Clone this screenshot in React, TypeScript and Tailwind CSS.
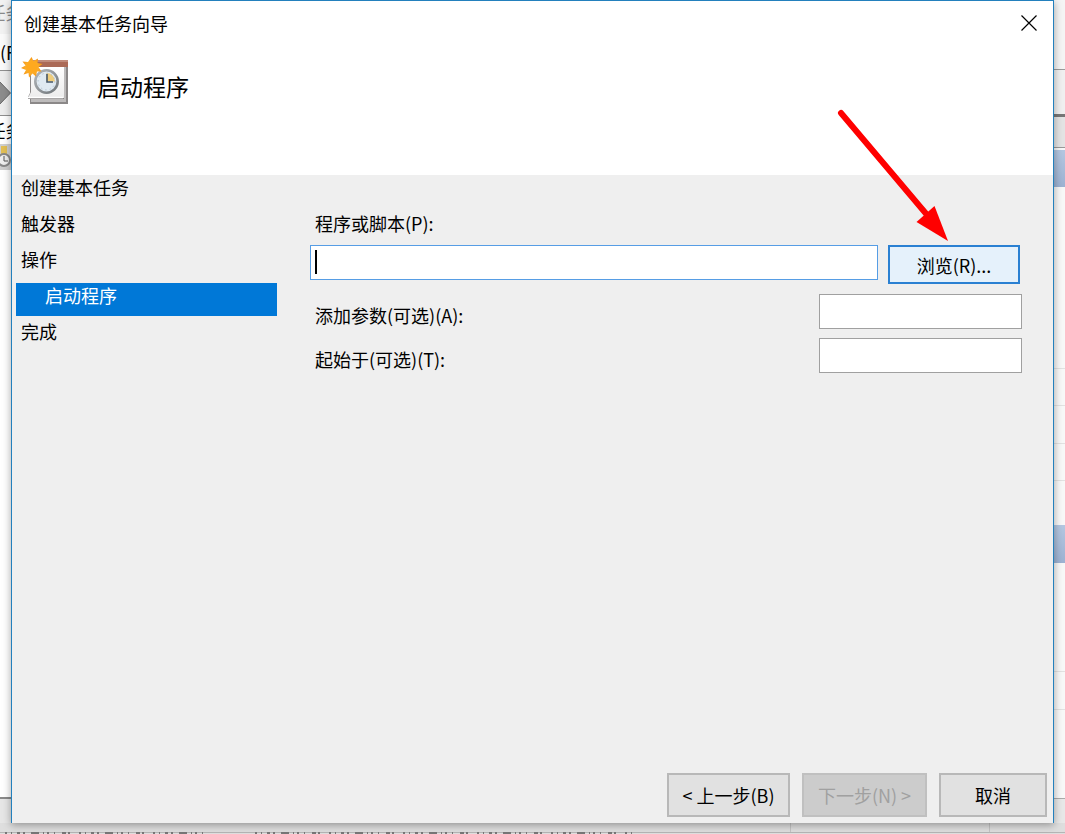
import { useState } from "react";

const steps = [
  { id: "basic", label: "创建基本任务" },
  { id: "trigger", label: "触发器" },
  { id: "action", label: "操作" },
  { id: "program", label: "启动程序", sub: true },
  { id: "finish", label: "完成" },
];

function TaskIcon() {
  return (
    <svg width="48" height="48" viewBox="0 0 48 48" aria-hidden="true">
      <defs>
        <linearGradient id="paper" x1="0" y1="0" x2="0" y2="1">
          <stop offset="0" stopColor="#ffffff" />
          <stop offset="1" stopColor="#ececec" />
        </linearGradient>
        <linearGradient id="rim" x1="0" y1="0" x2="1" y2="1">
          <stop offset="0" stopColor="#b4b8bc" />
          <stop offset="1" stopColor="#6f7579" />
        </linearGradient>
        <radialGradient id="sun">
          <stop offset="0" stopColor="#ffcf4a" />
          <stop offset="1" stopColor="#f79412" />
        </radialGradient>
      </defs>
      <path d="M9 5H47V47H9V42H7V40L9 36Z" fill="#8b8888" />
      <path d="M10 42H43V9H45V45H10Z" fill="#bdbbbb" />
      <path d="M10 3H47V10H10Z" fill="#ab6a57" />
      <path d="M10 3H47V5H10Z" fill="#c08b7b" />
      <path d="M10 10H43V41H7L10 35Z" fill="url(#paper)" />
      <path d="M7 40.500H42" stroke="#fff" strokeWidth="1.500" />
      <circle cx="25.500" cy="24.500" r="11.200" fill="#dfe9f1" stroke="url(#rim)" strokeWidth="2.600" />
      <path d="M25.500 24.500V16A8.500 8.500 0 0 1 34 24.500Z" fill="#efcd7c" />
      <circle cx="25.500" cy="24.500" r="8.400" fill="none" stroke="#a5b6c4" strokeWidth="1" strokeDasharray="1 3.400" />
      <path d="M26 17V25H32" fill="none" stroke="#45586b" strokeWidth="1.600" />
      <path
        d="M10.500 0L12.500 4L17 1.500L16.500 6L21.500 7L17.500 10L20.500 14.500L16 14.500L15 19.500L11.500 16.500L8 20.500L7.500 16L2.500 17.500L5 13L0 11L4.500 8.500L1.500 4.500L7 5Z"
        fill="url(#sun)"
      />
      <circle cx="11" cy="10" r="6" fill="#ffa91f" />
    </svg>
  );
}

function RedArrow() {
  return (
    <svg
      className="pointer-events-none absolute top-[106px] right-[104px]"
      width="114"
      height="136"
      viewBox="0 0 114 136"
      aria-hidden="true"
    >
      <path d="M6 6L93 109" stroke="#ff0000" strokeWidth="6" strokeLinecap="round" />
      <path d="M99.500 99L113 134L81.500 115Z" fill="#ff0000" />
    </svg>
  );
}

// Part of the main window that stays visible left of the wizard
function LeftEdge() {
  return (
    <div className="flex w-[11px] shrink-0 flex-col overflow-hidden whitespace-nowrap bg-white" aria-hidden="true">
      <div className="flex h-[34px] justify-center bg-[#f2f2f2] leading-6 text-[#8a8a8a]">任务</div>
      <div className="flex h-9 bg-[#fafafa] leading-9">(F)</div>
      <div className="flex h-[46px] items-center justify-end border-y border-[#8f8f8f] bg-[#ededed]">
        <svg className="shrink-0" width="24" height="24" viewBox="0 0 24 24">
          <path d="M12 0L23.500 12L12 24L0 12Z" fill="#8c8c8c" stroke="#666" />
        </svg>
      </div>
      <div className="flex h-7 justify-center leading-7">任务</div>
      <div className="flex h-[26px] items-center justify-center bg-[#cfcfcf]">
        <svg className="shrink-0" width="18" height="24" viewBox="0 0 18 24">
          <path d="M4 1H10V10H4Z" fill="#e2bf55" />
          <circle cx="7" cy="15" r="6" fill="#eee" stroke="#888" strokeWidth="2" />
          <path d="M7 11V16H11" fill="none" stroke="#555" />
        </svg>
      </div>
      <div className="flex-1 border-b-2 border-[#8a8a8a]" />
      <div className="h-6 bg-[#e6e6e6]" />
    </div>
  );
}

function RightEdge() {
  return (
    <div className="flex w-[11px] shrink-0 flex-col bg-[#f8f8f8]" aria-hidden="true">
      <div className="h-[70px] border-b border-[#9b9b9b] bg-[#f5f5f5]" />
      <div className="h-[47px] border-b-3 border-[#777] bg-[#f0f0f0]" />
      <div className="h-[31px] border-b border-[#999] bg-[#e4e4e4]" />
      <div className="mt-0.5 h-[37px] bg-linear-to-b from-[#b4c7e1] to-[#9db2d2]" />
      <div className="h-[182px] border-b border-[#e2e2e2]" />
      <div className="h-[37px] border-b border-[#e2e2e2]" />
      <div className="h-[38px] border-b border-[#e2e2e2]" />
      <div className="h-[37px] border-b border-[#e2e2e2]" />
      <div className="h-11" />
      <div className="h-[38px] bg-linear-to-b from-[#b4c7e1] to-[#9db2d2]" />
      <div className="h-[109px] border-b border-[#e2e2e2]" />
      <div className="h-[38px] border-b border-[#e2e2e2]" />
      <div className="flex-1 border-b border-[#aaa]" />
      <div className="h-6 bg-[#e8e8e8]" />
    </div>
  );
}

export default function App() {
  const [current, setCurrent] = useState("program");
  const [program, setProgram] = useState("");
  const [args, setArgs] = useState("");
  const [startIn, setStartIn] = useState("");

  return (
    <div className="flex min-h-screen flex-col overflow-hidden bg-[#dedede] font-['Noto_Sans_CJK_SC',sans-serif] text-lg text-black">
      <div className="flex flex-1">
        <LeftEdge />

        <main className="relative z-10 flex flex-1 flex-col border-x border-t border-[#2380bd] bg-[#efefef] shadow-[0_2px_8px_rgba(0,0,0,0.35)]">
          {/* Header */}
          <header className="h-[174px] bg-white">
            <div className="flex h-11 items-center justify-between pr-4 pl-3">
              <h1>创建基本任务向导</h1>
              <button type="button" aria-label="关闭">
                <svg width="16" height="16" viewBox="0 0 16 16">
                  <path d="M0.500 0.500L15.500 15.500M15.500 0.500L0.500 15.500" stroke="#000" strokeWidth="1.200" />
                </svg>
              </button>
            </div>
            <div className="mt-3 flex items-end gap-7 pl-[9px]">
              <TaskIcon />
              <h2 className="text-[23px] leading-[38px]">启动程序</h2>
            </div>
          </header>

          <div className="flex flex-1 pl-1">
            {/* Steps */}
            <nav className="flex w-[261px] shrink-0 flex-col gap-[3px]">
              {steps.map((step) => (
                <button
                  key={step.id}
                  type="button"
                  onClick={() => setCurrent(step.id)}
                  className={`flex h-[33px] items-start text-left leading-6 ${step.sub ? "pl-[29px]" : "pl-[5px]"} ${
                    current === step.id ? "bg-[#0078d7] text-white" : ""
                  }`}
                >
                  {step.label}
                </button>
              ))}
            </nav>

            {/* Program settings */}
            <form className="ml-[33px] flex-1 pt-[34px] pr-[31px]" onSubmit={(e) => e.preventDefault()}>
              <label htmlFor="program" className="block pl-[5px] leading-7">
                程序或脚本(P):
              </label>
              <div className="mt-2 flex items-start gap-[10px]">
                <div className="relative flex-1">
                  <input
                    id="program"
                    type="text"
                    value={program}
                    onChange={(e) => setProgram(e.target.value)}
                    className="block h-[35px] w-full border border-[#569de5] bg-white px-1 caret-transparent outline-none"
                  />
                  {program === "" && <span className="absolute top-[5px] left-[5px] h-6 w-0.5 bg-black" />}
                </div>
                <button
                  type="button"
                  className="mr-0.5 h-[39px] w-[132px] border-2 border-[#2a80d2] bg-[#e5f1fb]"
                >
                  浏览(R)...
                </button>
              </div>
              <div className="mt-[10px] flex items-end justify-between">
                <label htmlFor="args" className="pl-[5px] leading-7">
                  添加参数(可选)(A):
                </label>
                <input
                  id="args"
                  type="text"
                  value={args}
                  onChange={(e) => setArgs(e.target.value)}
                  className="h-[35px] w-[203px] border border-[#a0a0a0] bg-white px-1 outline-none"
                />
              </div>
              <div className="mt-[9px] flex items-end justify-between">
                <label htmlFor="start-in" className="pl-[5px] leading-7">
                  起始于(可选)(T):
                </label>
                <input
                  id="start-in"
                  type="text"
                  value={startIn}
                  onChange={(e) => setStartIn(e.target.value)}
                  className="h-[35px] w-[203px] border border-[#a0a0a0] bg-white px-1 outline-none"
                />
              </div>
            </form>
          </div>

          {/* Buttons */}
          <footer className="flex justify-end gap-3 pr-1.5 pb-1.5">
            <button type="button" className="h-11 w-[123px] border-2 border-[#b8b8b8] bg-[#e1e1e1]">
              &lt; 上一步(B)
            </button>
            <button
              type="button"
              disabled
              className="h-11 w-[125px] border-2 border-[#c0c0c0] bg-[#cccccc] text-[#a0a0a0]"
            >
              下一步(N) &gt;
            </button>
            <button type="button" className="h-11 w-[108px] border-2 border-[#b8b8b8] bg-[#e1e1e1]">
              取消
            </button>
          </footer>

          <RedArrow />
        </main>

        <RightEdge />
      </div>

      {/* Status bar of the main window */}
      <svg className="block h-[11px] w-full" aria-hidden="true">
        <path d="M0 9.500H2000" stroke="#b5b5b5" />
        <path d="M790.500 0V9M989.500 0V9" stroke="#c4c4c4" />
        <path
          d="M5 10H210M255 10H635"
          stroke="#777"
          strokeWidth="2"
          strokeDasharray="2 4 1 5 3 3 2 6 8 4 1 3 2 5 1 7 4 2 2 9"
        />
      </svg>
    </div>
  );
}
